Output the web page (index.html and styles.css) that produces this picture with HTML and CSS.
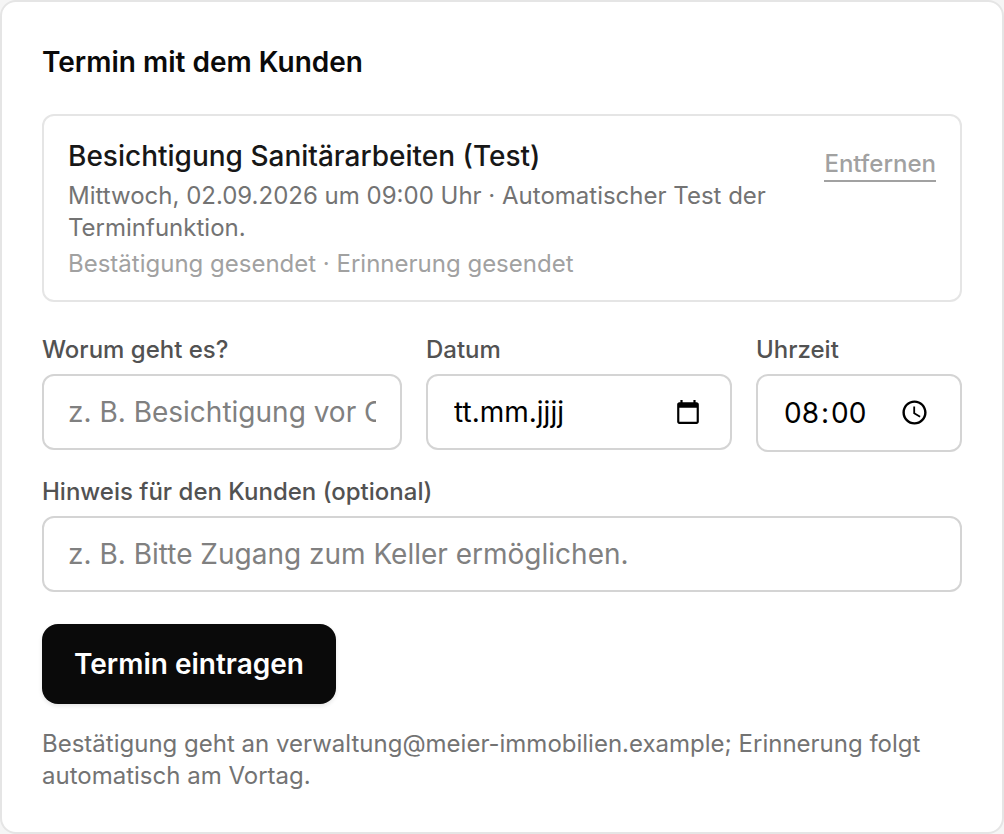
FILE: index.html
```
<!DOCTYPE html>
<html lang="de">
<head>
    <meta charset="UTF-8">
    <meta name="viewport" content="width=device-width, initial-scale=1.0">
    <title>Termin mit dem Kunden</title>
    <link rel="stylesheet" href="styles.css">
</head>
<body>
    <section class="card">
        <h2>Termin mit dem Kunden</h2>

        <div class="appointment">
            <div class="appointment-info">
                <h3>Besichtigung Sanitärarbeiten (Test)</h3>
                <p class="details">Mittwoch, 02.09.2026 um 09:00 Uhr · Automatischer Test der Terminfunktion.</p>
                <p class="status">Bestätigung gesendet · Erinnerung gesendet</p>
            </div>
            <button type="button" class="remove-btn">Entfernen</button>
        </div>

        <form>
            <div class="fields">
                <div class="field">
                    <label for="subject">Worum geht es?</label>
                    <input type="text" id="subject" placeholder="z. B. Besichtigung vor Ort">
                </div>
                <div class="field">
                    <label for="date">Datum</label>
                    <div class="picker">
                        <input type="text" id="date" value="tt.mm.jjjj">
                        <svg class="icon" viewBox="0 0 24 24" aria-hidden="true">
                            <path d="M20 3h-1V1h-2v2H7V1H5v2H4c-1.100 0-2 .9-2 2v16c0 1.100.9 2 2 2h16c1.100 0 2-.9 2-2V5c0-1.100-.9-2-2-2zm0 18H4V8h16v13z"/>
                        </svg>
                    </div>
                </div>
                <div class="field">
                    <label for="time">Uhrzeit</label>
                    <input type="time" id="time" value="08:00">
                </div>
            </div>

            <div class="field">
                <label for="note">Hinweis für den Kunden (optional)</label>
                <input type="text" id="note" placeholder="z. B. Bitte Zugang zum Keller ermöglichen.">
            </div>

            <button type="submit" class="submit-btn">Termin eintragen</button>
        </form>

        <p class="hint">Bestätigung geht an verwaltung@meier-immobilien.example; Erinnerung folgt automatisch am Vortag.</p>
    </section>
</body>
</html>
```
FILE: styles.css
```
* {
    box-sizing: border-box;
}
body {
    margin: 0;
    background-color: #f5f5f5;
    color: #0a0a0a;
    font-family: Inter, "Liberation Sans", sans-serif;
    font-size: 24px;
    line-height: 32px;
}
h2, h3, p {
    margin: 0;
}
.card {
    padding: 40px;
    background-color: #fff;
    border: 2px solid #e5e5e5;
    border-radius: 16px;
}
h2 {
    margin-bottom: 32px;
    font-size: 28px;
    font-weight: 600;
    line-height: 40px;
}
.appointment {
    display: flex;
    align-items: flex-start;
    justify-content: space-between;
    gap: 24px;
    margin-bottom: 32px;
    padding: 20px 24px;
    border: 2px solid #e5e5e5;
    border-radius: 12px;
}
h3 {
    color: #171717;
    font-size: 28px;
    font-weight: 500;
    line-height: 40px;
}
.details {
    margin-top: 4px;
    color: #737373;
}
.status {
    margin-top: 4px;
    color: #a1a1a1;
}
.remove-btn {
    flex-shrink: 0;
    margin-top: 12px;
    padding: 0;
    border: none;
    border-bottom: 2px solid #a1a1a1;
    background: none;
    color: #a1a1a1;
    font: inherit;
    font-weight: 500;
    cursor: pointer;
}
.fields {
    display: grid;
    grid-template-columns: 1fr 306px 206px;
    gap: 24px;
    margin-bottom: 24px;
}
label {
    display: block;
    margin-bottom: 8px;
    color: #525252;
    font-weight: 500;
}
input, .picker {
    width: 100%;
    height: 76px;
    border: 2px solid #d4d4d4;
    border-radius: 12px;
    background-color: #fff;
}
input {
    display: block;
    padding: 0 24px;
    color: #000;
    font-family: inherit;
    font-size: 28px;
}
input::placeholder {
    color: #808080;
}
.picker {
    display: flex;
    align-items: center;
    padding: 0 29px 0 26px;
}
.picker input {
    flex: 1;
    min-width: 0;
    height: 40px;
    padding: 0;
    border: none;
    border-radius: 0;
}
.icon {
    flex-shrink: 0;
    width: 26px;
    height: 26px;
}
input[type="time"] {
    display: flex;
    align-items: center;
    height: 78px;
}
input[type="time"]::-webkit-datetime-edit-hour-field,
input[type="time"]::-webkit-datetime-edit-minute-field {
    padding: 0 2px;
}
/* 24h clock, no AM/PM: the clock icon moves into the free space */
input[type="time"]::-webkit-datetime-edit-ampm-field {
    display: none;
}
input[type="time"]::-webkit-calendar-picker-indicator {
    margin: 0 0 0 -20px;
}
.submit-btn {
    display: block;
    height: 80px;
    margin: 32px 0 24px;
    padding: 0 32px;
    border: none;
    border-radius: 16px;
    background-color: #0a0a0a;
    color: #fff;
    font-family: inherit;
    font-size: 28px;
    font-weight: 600;
    box-shadow: 0 2px 4px rgba(0, 0, 0, 0.1);
    cursor: pointer;
}
.hint {
    color: #737373;
}
```
